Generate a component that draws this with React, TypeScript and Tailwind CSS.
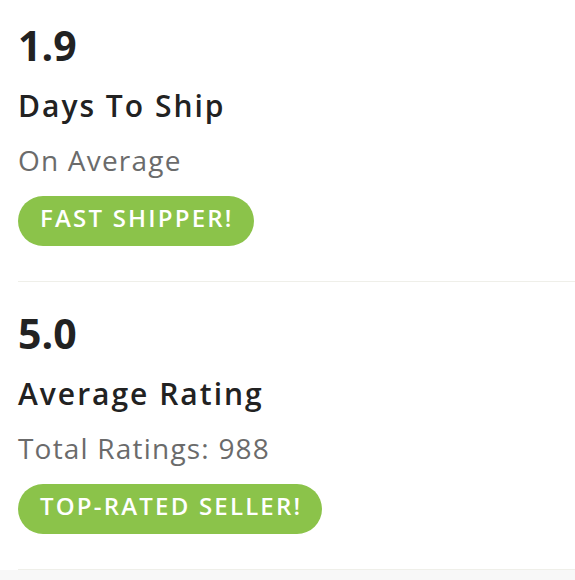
import React from 'react';

type Stat = {
    value: string;
    title: string;
    subtitle: string;
    badge: string;
};

const stats: Stat[] = [
    { value: '1.9', title: 'Days To Ship', subtitle: 'On Average', badge: 'FAST SHIPPER!' },
    { value: '5.0', title: 'Average Rating', subtitle: 'Total Ratings: 988', badge: 'TOP-RATED SELLER!' },
];

const StatBlock: React.FC<{ stat: Stat; first?: boolean }> = ({ stat, first }) => (
    <div className={`ml-[18px] pb-[35px] border-b border-[#efefe9] ${first ? 'pt-[25px]' : 'pt-[31px]'}`}>
        <div className="text-[41px] leading-[41px] font-bold text-[#222222]">{stat.value}</div>
        <div className="mt-[25px] text-[30px] leading-[30px] font-semibold text-[#222222] tracking-[2px]">{stat.title}</div>
        <div className="mt-[25px] text-[28px] leading-[28px] text-[#6b6b6b] tracking-[1.2px]">{stat.subtitle}</div>
        <div className="mt-[22px] inline-flex items-center h-[50px] pl-[22px] pr-[20px] pb-[7px] rounded-full bg-[#8bc34a] text-white text-[24px] leading-[24px] font-semibold tracking-[2.2px]">
            {stat.badge}
        </div>
    </div>
);

export default function App() {
    return (
        <div className="w-[575px] h-[580px] bg-white overflow-hidden flex flex-col" style={{ fontFamily: '"Open Sans", Lato, sans-serif' }}>
            {stats.map((stat, i) => (
                <StatBlock key={stat.value} stat={stat} first={i === 0} />
            ))}
            <div className="flex-1 bg-[#f8f8f8]" />
        </div>
    );
}
